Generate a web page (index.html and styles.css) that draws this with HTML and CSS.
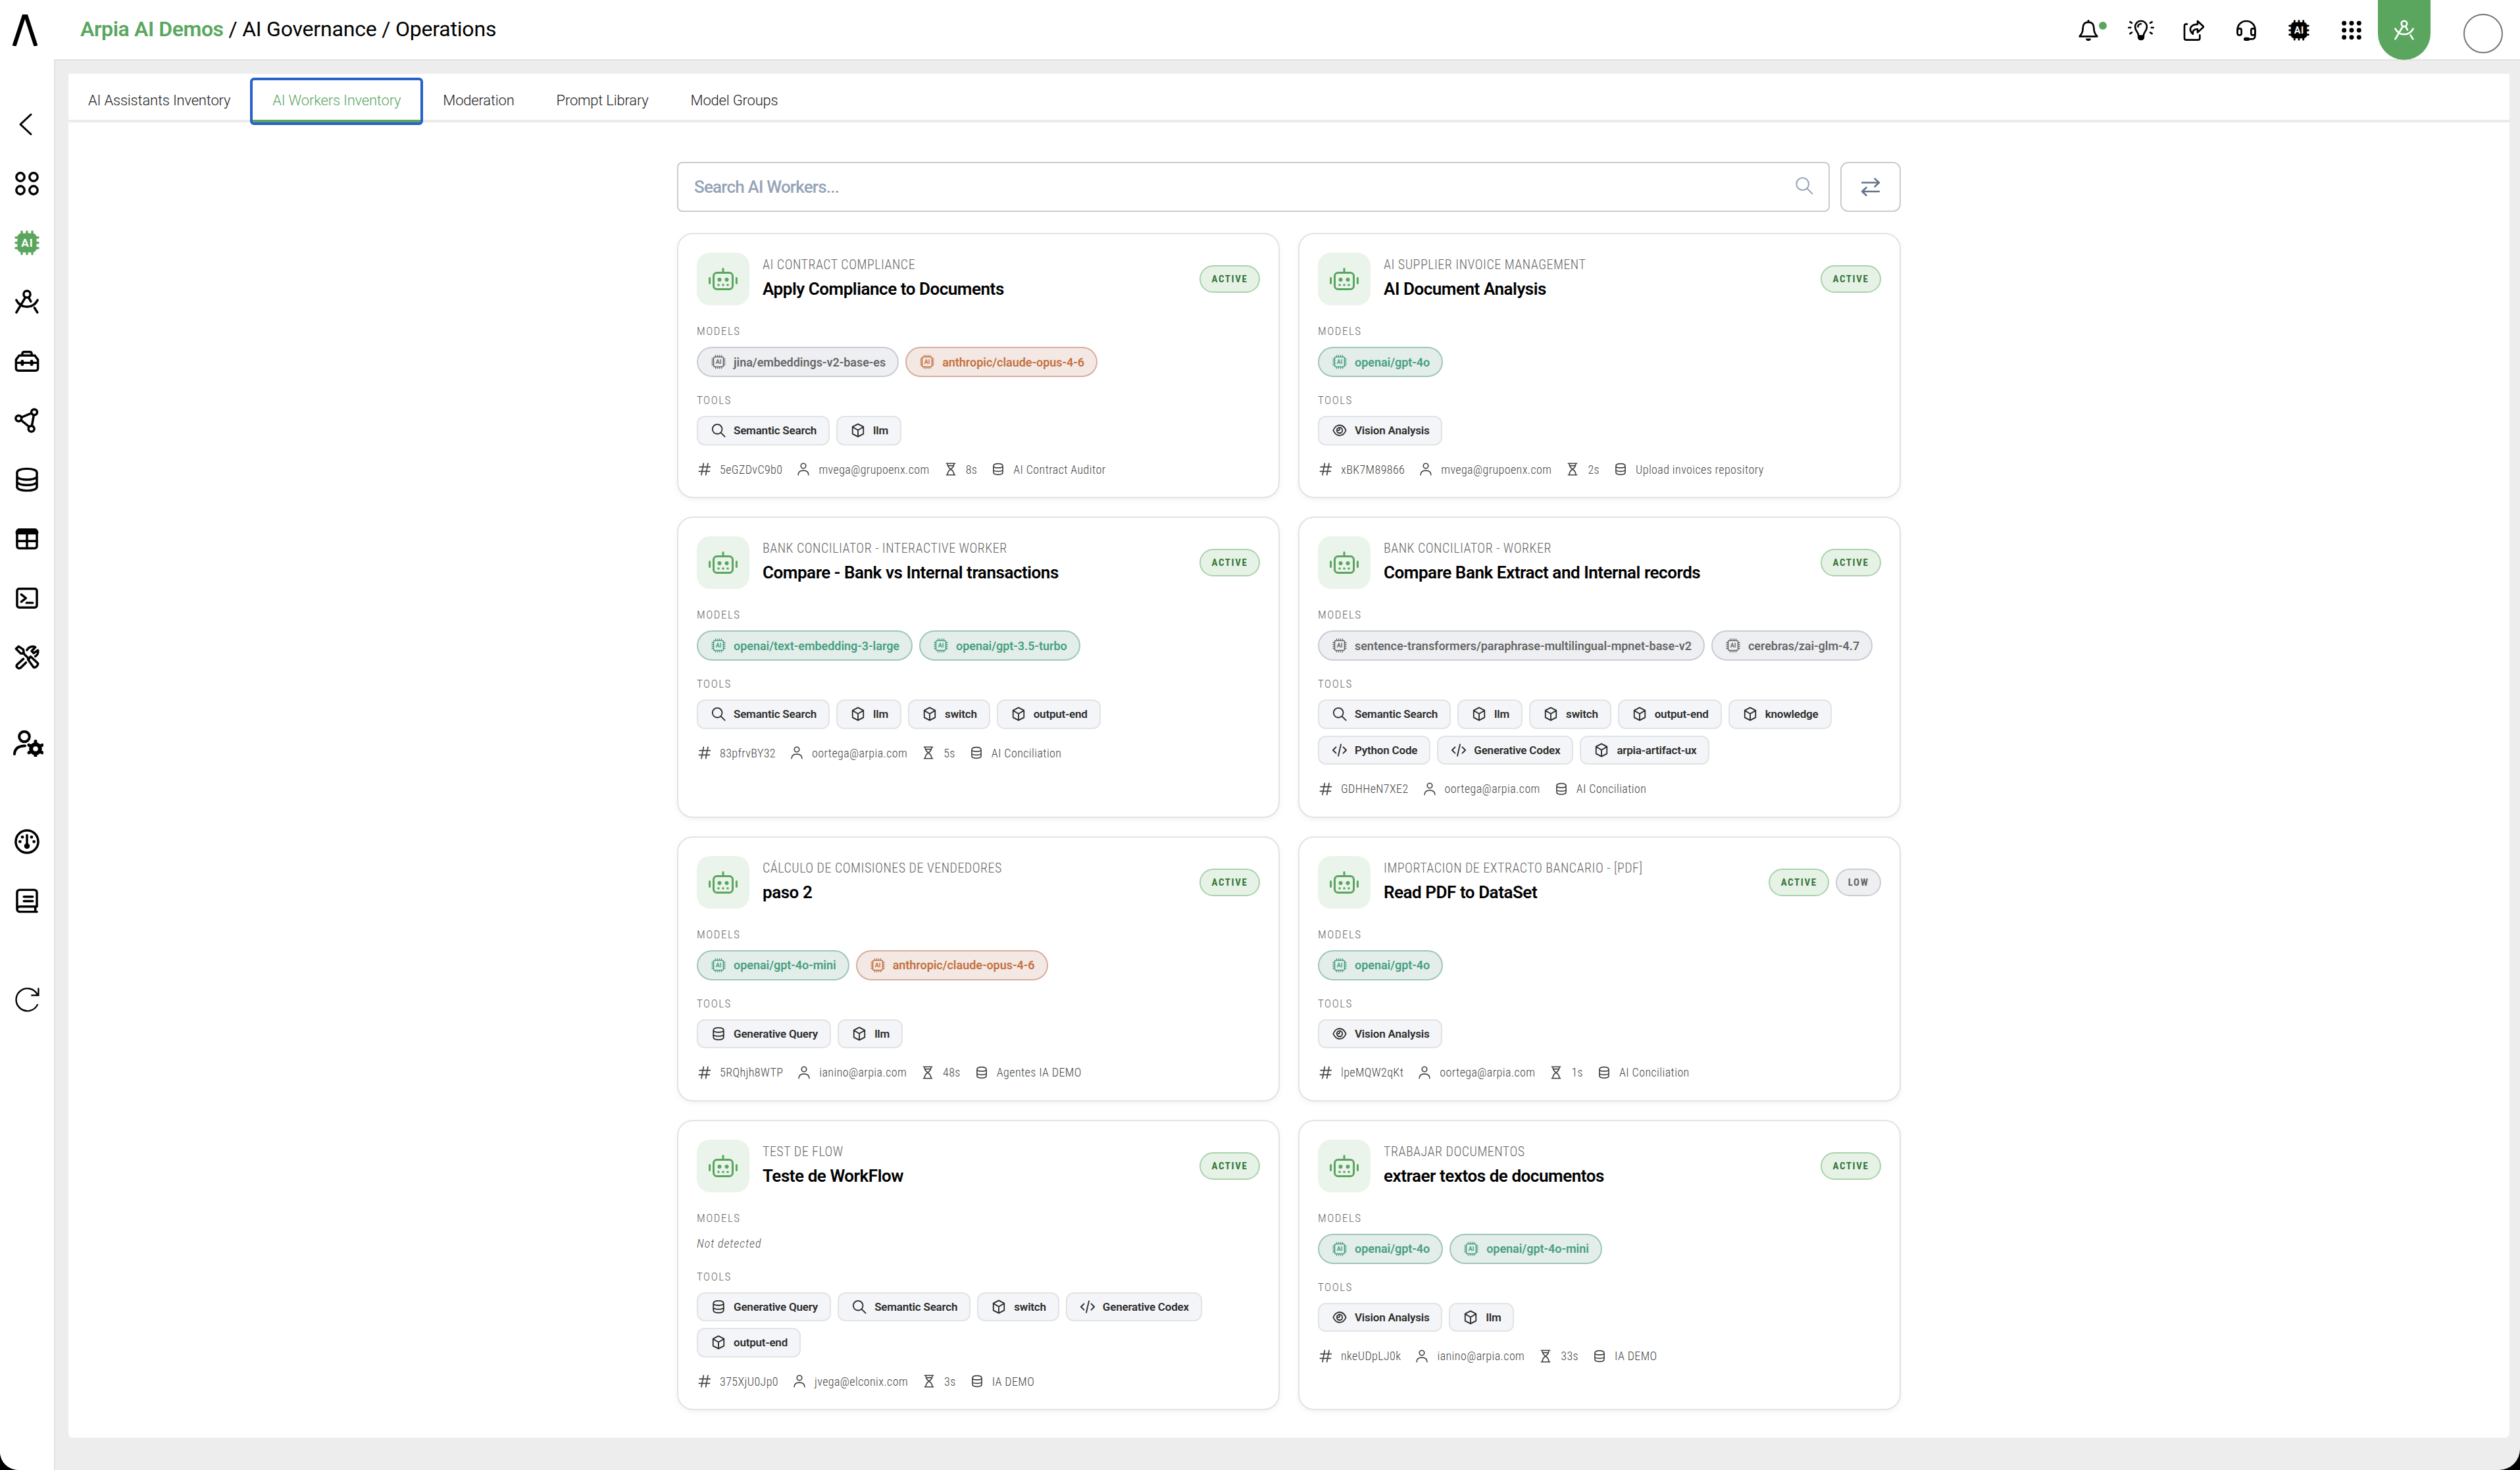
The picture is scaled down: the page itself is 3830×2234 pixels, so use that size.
FILE: index.html
```html
<!DOCTYPE html>
<html lang="en">
<head>
<meta charset="utf-8">
<title>Arpia AI Demos - Operations</title>
<link rel="stylesheet" href="styles.css">
</head>
<body>

<!-- icon sprite -->
<svg class="sprite" xmlns="http://www.w3.org/2000/svg">
  <symbol id="i-robot" viewBox="0 0 44 34">
    <rect x="7.5" y="7.5" width="29" height="25" rx="5" fill="none" stroke="currentColor" stroke-width="3"/>
    <path d="M22 1.5V7M1.6 15.5v8M42.4 15.5v8" stroke="currentColor" stroke-width="3" stroke-linecap="round"/>
    <g fill="currentColor"><circle cx="16.5" cy="18" r="3"/><circle cx="27.5" cy="18" r="3"/><circle cx="15" cy="26" r="1.8"/><circle cx="22" cy="26" r="1.8"/><circle cx="29" cy="26" r="1.8"/></g>
  </symbol>
  <symbol id="i-chip" viewBox="0 0 22 22">
    <rect x="3.500" y="3.500" width="15" height="15" rx="2" fill="none" stroke="currentColor" stroke-width="1.6"/>
    <path d="M6.500 .5v2.500M9.500 .5v2.500M12.500 .5v2.500M15.500 .5v2.500M6.500 19v2.500M9.500 19v2.500M12.500 19v2.500M15.500 19v2.500M.5 6.500h2.500M.5 9.500h2.500M.5 12.500h2.500M.5 15.500h2.500M19 6.500h2.500M19 9.500h2.500M19 12.500h2.500M19 15.500h2.500" stroke="currentColor" stroke-width="1.300" stroke-linecap="butt"/>
    <text class="chip-ai" x="11" y="14.200" text-anchor="middle">AI</text>
  </symbol>
  <symbol id="i-chip-fill" viewBox="0 0 38 38">
    <rect x="4.5" y="4.5" width="29" height="29" rx="6" fill="currentColor"/>
    <path d="M11 2v34M19 2v34M27 2v34M2 11h34M2 19h34M2 27h34" stroke="currentColor" stroke-width="3.4" stroke-linecap="round"/>
    <text class="chip-ai-fill" x="19.500" y="25" text-anchor="middle">AI</text>
  </symbol>
  <symbol id="i-search" viewBox="0 0 24 24"><circle cx="10" cy="10" r="8" /><path d="M16 16l6.5 6.5"/></symbol>
  <symbol id="i-cube" viewBox="0 0 24 24"><path d="M12 1.5l9 4.7v11.6l-9 4.7-9-4.7V6.2zM3.3 6.5L12 11.8l8.7-5.3M12 11.8v10.4"/></symbol>
  <symbol id="i-eye" viewBox="0 0 24 24"><path d="M1.5 12C4 6 8 3.500 12 3.500S20 6 22.500 12C20 18 16 20.500 12 20.500S4 18 1.500 12z"/><circle cx="12" cy="12" r="4.600"/><path d="M12 9.700a2.300 2.300 0 0 1-2.300 2.300"/></symbol>
  <symbol id="i-code" viewBox="0 0 24 24"><path d="M6 7l-5 5 5 5M18 7l5 5-5 5M14.200 2.500L9.800 21.500"/></symbol>
  <symbol id="i-db" viewBox="0 0 24 24"><path d="M3.500 6.500c0-3 2-4.500 8.500-4.500s8.500 1.500 8.500 4.500v11c0 3-2 4.500-8.500 4.500s-8.500-1.500-8.500-4.500zM3.500 7c1 2 4 2.500 8.500 2.500s7.500-.5 8.500-2.500M3.500 13.500c1 2 4 2.500 8.500 2.500s7.500-.5 8.500-2.500"/></symbol>
  <symbol id="i-hash" viewBox="0 0 24 24"><path d="M10 1.500L6 22.500M18 1.500l-4 21M2.500 8h19.500M1.500 16h19.500"/></symbol>
  <symbol id="i-user" viewBox="0 0 24 24"><circle cx="12" cy="6" r="4.500"/><path d="M2.500 22.500c0-5.500 3.500-8 9.500-8s9.500 2.500 9.500 8"/></symbol>
  <symbol id="i-glass" viewBox="0 0 24 24"><path d="M4 1.500h16M4 22.500h16M6 1.500c0 5 1.500 7.500 6 10.500 4.500-3 6-5.500 6-10.500M6 22.500c0-5 1.500-7.500 6-10.500 4.500 3 6 5.500 6 10.500M7.500 5.500h9"/></symbol>
  <symbol id="i-swap" viewBox="0 0 26 26"><path d="M1 7h24M19 1.500L25 7l-6 5.500M25 19.500H1M7 14l-6 5.500L7 25"/></symbol>
  <symbol id="i-compass" viewBox="0 0 24 24"><circle cx="12" cy="4.500" r="3.200"/><path d="M10.500 7.500L1.800 22M13.500 7.500l2.200 4M19.200 17.500L22 22M1.800 10.200c4.500 8.600 15.900 8.600 20.400 0"/></symbol>
</svg>

<div class="app">

  <aside class="sidebar">
    <div class="logo"><svg viewBox="0 0 40 48"><path d="M3.500 48L18.500 2h3L36.500 48" fill="none" stroke="#000" stroke-width="6"/></svg></div>
    <nav class="nav">
      <a class="nav-item back"><svg viewBox="0 0 24 38"><path d="M20 4L4 19l16 15"/></svg></a>
      <a class="nav-item"><svg viewBox="0 0 24 24"><circle cx="5.700" cy="5.700" r="3.900"/><circle cx="18.300" cy="5.700" r="3.900"/><circle cx="5.700" cy="18.300" r="3.900"/><circle cx="18.300" cy="18.300" r="3.900"/></svg></a>
      <a class="nav-item active"><svg class="plain"><use href="#i-chip-fill"/></svg></a>
      <a class="nav-item"><svg><use href="#i-compass"/></svg></a>
      <a class="nav-item"><svg viewBox="0 0 24 24"><path d="M4.500 6.500h15l3 4V19a2 2 0 0 1-2 2h-17a2 2 0 0 1-2-2v-8.500zM7.500 6.500V5c0-1.300.7-2 2-2h5c1.300 0 2 .7 2 2v1.500M1.500 13.500h21"/><path d="M7.500 12v3M16.500 12v3" stroke-width="3"/></svg></a>
      <a class="nav-item"><svg viewBox="0 0 24 24"><circle cx="4" cy="10" r="2.800"/><circle cx="19" cy="4" r="2.800"/><circle cx="16.200" cy="20" r="2.800"/><path d="M6.700 9L16.300 5M6.300 11.700l7.700 6.300M18.500 7l-1.800 10"/></svg></a>
      <a class="nav-item"><svg viewBox="0 0 24 24"><path d="M2.500 5c0-2 4-3.500 9.500-3.500s9.500 1.500 9.500 3.500v14c0 2-4 3.500-9.500 3.500s-9.500-1.500-9.500-3.500zM2.500 9.500c2 1.800 5 2.500 9.500 2.500s7.500-.7 9.500-2.500M2.500 14.700c2 1.800 5 2.500 9.500 2.500s7.500-.7 9.500-2.500"/></svg></a>
      <a class="nav-item"><svg viewBox="0 0 24 24"><rect x="2.500" y="3" width="19" height="18" rx="2"/><path d="M2.500 5.500h19M2.500 14h19M12 7v14" /><path d="M3 5.800h18" stroke-width="4"/></svg></a>
      <a class="nav-item"><svg viewBox="0 0 24 24"><rect x="2.500" y="3" width="19" height="18" rx="2"/><path d="M6.500 8.500l4.500 3.500-4.500 3.500M11.500 16.500h6"/></svg></a>
      <a class="nav-item"><svg viewBox="0 0 24 24"><path d="M1.500 3.800L4 1.500l4.500 3 .5 3.500-3 .3zM8.500 8l5.500 5.500M13 14l2.500-2.800 6.800 6.300c1 1.500-2 5-4 4zM8.500 13.500l-6 5.500c-1.500 2 1 4.500 3.500 3L11 17M12 5c2-3.500 5.500-4 8-2.800L16.500 6l2 2L22.500 5.200c.5 2.300-.5 4.800-2.500 5.800"/></svg></a>
      <a class="nav-item user"><svg class="wide" viewBox="0 0 46 40"><g stroke-width="4"><circle cx="17" cy="9.500" r="7.800"/><path d="M2 36c.5-8 6-12.500 16-12.500"/></g><circle cx="34" cy="28" r="6.800" stroke-width="6"/><path d="M34 16.500v4M34 35.500v4M24 22.300l3.500 2M40.500 31.800l3.500 2M24 33.800l3.500-2M40.500 24.300l3.500-2" stroke-width="5"/></svg></a>
      <a class="nav-item gauge"><svg viewBox="0 0 24 24"><circle cx="12" cy="12" r="10.800"/><path d="M12 5.800V16"/><g fill="currentColor" stroke="none"><circle cx="12" cy="16.300" r="2.700"/><circle cx="7.600" cy="7.600" r="1.500"/><circle cx="16.400" cy="7.600" r="1.500"/><circle cx="5.300" cy="12" r="1.500"/><circle cx="18.700" cy="12" r="1.500"/></g></svg></a>
      <a class="nav-item"><svg viewBox="0 0 24 24"><path d="M21.500 22.500H5a2.500 2.500 0 0 1-2.500-2.500V4A2.500 2.500 0 0 1 5 1.500h14A2.500 2.500 0 0 1 21.500 4v13.500H5A2.500 2.500 0 0 0 2.500 20M20 18v4M9 8h8.500M9 12.300h8.500"/></svg></a>
      <a class="nav-item refresh"><svg viewBox="0 0 24 24"><path d="M22.300 16.500A10.800 10.800 0 1 1 22 7.200M23 1v7h-7"/></svg></a>
    </nav>
  </aside>

  <div class="main">
    <header class="topbar">
      <div class="breadcrumb"><b>Arpia AI Demos</b> / AI Governance / Operations</div>
      <div class="tools">
        <a class="tool bell"><svg viewBox="0 0 24 24"><path d="M12 1v2M12 2.700c-4.200 0-6.300 3-6.300 6.800 0 5-1.500 6.500-3.700 9.500h20c-2.200-3-3.700-4.500-3.700-9.500 0-3.800-2.100-6.800-6.300-6.800z"/><path d="M9.500 21.700a2.500 2 0 0 0 5 0z" fill="currentColor" stroke-width=".8"/></svg><i class="dot"></i></a>
        <a class="tool"><svg class="bulb" viewBox="0 0 30 24"><path d="M12 17.500c0-3.500-3.700-4.500-3.700-9.500a6.700 6.700 0 0 1 13.400 0c0 5-3.700 6-3.700 9.500M11.500 8A3.500 3.500 0 0 1 15 4.700M1 9h2.200M26.800 9H29M2.500 2.500l2 1.200M27.500 2.500l-2 1.200M2.500 15.800l2-1.200M27.500 15.800l-2-1.200"/><path d="M12 18.500h6c0 3-1 4-3 4s-3-1-3-4z" fill="currentColor"/></svg></a>
        <a class="tool"><svg viewBox="0 0 24 24"><path d="M4.500 5H3.500A2 2 0 0 0 1.500 7v14a2 2 0 0 0 2 2h13.500a2 2 0 0 0 2-2v-3.500M16.500 1.500L23.500 8l-7 6.500v-3.800c-4 0-6 1.500-5.300 5.600C6 12 7.500 5.500 16.500 5.200z"/></svg></a>
        <a class="tool"><svg viewBox="0 0 24 24"><path d="M2 15V11a10 9.500 0 0 1 20 0v7.500c0 2.500-1.500 3.500-4 3.500h-5"/><rect x="2" y="10" width="4.500" height="7.500" rx="2"/><rect x="17.500" y="10" width="4.500" height="7.500" rx="2"/><path d="M11 22h3" stroke-width="4"/></svg></a>
        <a class="tool"><svg class="plain"><use href="#i-chip-fill"/></svg></a>
        <a class="tool"><svg class="plain" viewBox="0 0 24 24"><g fill="currentColor"><circle cx="3.500" cy="4" r="2.600"/><circle cx="12" cy="4" r="2.600"/><circle cx="20.500" cy="4" r="2.600"/><circle cx="3.500" cy="12" r="2.600"/><circle cx="12" cy="12" r="2.600"/><circle cx="20.500" cy="12" r="2.600"/><circle cx="3.500" cy="20" r="2.600"/><circle cx="12" cy="20" r="2.600"/><circle cx="20.500" cy="20" r="2.600"/></g></svg></a>
        <a class="tool current"><svg><use href="#i-compass"/></svg></a>
        <span class="avatar"></span>
      </div>
    </header>

    <section class="panel">
      <div class="tabs">
        <a class="tab">AI Assistants Inventory</a>
        <a class="tab active">AI Workers Inventory</a>
        <a class="tab">Moderation</a>
        <a class="tab">Prompt Library</a>
        <a class="tab">Model Groups</a>
      </div>

      <div class="content">
        <div class="searchbar">
          <div class="search"><span>Search AI Workers...</span><svg><use href="#i-search"/></svg></div>
          <div class="swap"><svg><use href="#i-swap"/></svg></div>
        </div>

        <div class="cards">

          <article class="card">
            <div class="head">
              <div class="bot"><svg><use href="#i-robot"/></svg></div>
              <div class="names"><div class="project">AI CONTRACT COMPLIANCE</div><h3>Apply Compliance to Documents</h3></div>
              <span class="badge">ACTIVE</span>
            </div>
            <div class="label">MODELS</div>
            <div class="chips">
              <span class="model"><svg><use href="#i-chip"/></svg>jina/embeddings-v2-base-es</span>
              <span class="model anthropic"><svg><use href="#i-chip"/></svg>anthropic/claude-opus-4-6</span>
            </div>
            <div class="label">TOOLS</div>
            <div class="chips">
              <span class="chip"><svg><use href="#i-search"/></svg>Semantic Search</span>
              <span class="chip"><svg><use href="#i-cube"/></svg>llm</span>
            </div>
            <div class="meta">
              <span><svg><use href="#i-hash"/></svg>5eGZDvC9b0</span>
              <span><svg><use href="#i-user"/></svg>mvega@grupoenx.com</span>
              <span><svg><use href="#i-glass"/></svg>8s</span>
              <span><svg><use href="#i-db"/></svg>AI Contract Auditor</span>
            </div>
          </article>

          <article class="card">
            <div class="head">
              <div class="bot"><svg><use href="#i-robot"/></svg></div>
              <div class="names"><div class="project">AI SUPPLIER INVOICE MANAGEMENT</div><h3>AI Document Analysis</h3></div>
              <span class="badge">ACTIVE</span>
            </div>
            <div class="label">MODELS</div>
            <div class="chips">
              <span class="model openai"><svg><use href="#i-chip"/></svg>openai/gpt-4o</span>
            </div>
            <div class="label">TOOLS</div>
            <div class="chips">
              <span class="chip"><svg><use href="#i-eye"/></svg>Vision Analysis</span>
            </div>
            <div class="meta">
              <span><svg><use href="#i-hash"/></svg>xBK7M89866</span>
              <span><svg><use href="#i-user"/></svg>mvega@grupoenx.com</span>
              <span><svg><use href="#i-glass"/></svg>2s</span>
              <span><svg><use href="#i-db"/></svg>Upload invoices repository</span>
            </div>
          </article>

          <article class="card">
            <div class="head">
              <div class="bot"><svg><use href="#i-robot"/></svg></div>
              <div class="names"><div class="project">BANK CONCILIATOR - INTERACTIVE WORKER</div><h3>Compare - Bank vs Internal transactions</h3></div>
              <span class="badge">ACTIVE</span>
            </div>
            <div class="label">MODELS</div>
            <div class="chips">
              <span class="model openai"><svg><use href="#i-chip"/></svg>openai/text-embedding-3-large</span>
              <span class="model openai"><svg><use href="#i-chip"/></svg>openai/gpt-3.5-turbo</span>
            </div>
            <div class="label">TOOLS</div>
            <div class="chips">
              <span class="chip"><svg><use href="#i-search"/></svg>Semantic Search</span>
              <span class="chip"><svg><use href="#i-cube"/></svg>llm</span>
              <span class="chip"><svg><use href="#i-cube"/></svg>switch</span>
              <span class="chip"><svg><use href="#i-cube"/></svg>output-end</span>
            </div>
            <div class="meta">
              <span><svg><use href="#i-hash"/></svg>83pfrvBY32</span>
              <span><svg><use href="#i-user"/></svg>oortega@arpia.com</span>
              <span><svg><use href="#i-glass"/></svg>5s</span>
              <span><svg><use href="#i-db"/></svg>AI Conciliation</span>
            </div>
          </article>

          <article class="card">
            <div class="head">
              <div class="bot"><svg><use href="#i-robot"/></svg></div>
              <div class="names"><div class="project">BANK CONCILIATOR - WORKER</div><h3>Compare Bank Extract and Internal records</h3></div>
              <span class="badge">ACTIVE</span>
            </div>
            <div class="label">MODELS</div>
            <div class="chips">
              <span class="model"><svg><use href="#i-chip"/></svg>sentence-transformers/paraphrase-multilingual-mpnet-base-v2</span>
              <span class="model"><svg><use href="#i-chip"/></svg>cerebras/zai-glm-4.7</span>
            </div>
            <div class="label">TOOLS</div>
            <div class="chips">
              <span class="chip"><svg><use href="#i-search"/></svg>Semantic Search</span>
              <span class="chip"><svg><use href="#i-cube"/></svg>llm</span>
              <span class="chip"><svg><use href="#i-cube"/></svg>switch</span>
              <span class="chip"><svg><use href="#i-cube"/></svg>output-end</span>
              <span class="chip"><svg><use href="#i-cube"/></svg>knowledge</span>
              <span class="chip"><svg><use href="#i-code"/></svg>Python Code</span>
              <span class="chip"><svg><use href="#i-code"/></svg>Generative Codex</span>
              <span class="chip"><svg><use href="#i-cube"/></svg>arpia-artifact-ux</span>
            </div>
            <div class="meta">
              <span><svg><use href="#i-hash"/></svg>GDHHeN7XE2</span>
              <span><svg><use href="#i-user"/></svg>oortega@arpia.com</span>
              <span><svg><use href="#i-db"/></svg>AI Conciliation</span>
            </div>
          </article>

          <article class="card">
            <div class="head">
              <div class="bot"><svg><use href="#i-robot"/></svg></div>
              <div class="names"><div class="project">CÁLCULO DE COMISIONES DE VENDEDORES</div><h3>paso 2</h3></div>
              <span class="badge">ACTIVE</span>
            </div>
            <div class="label">MODELS</div>
            <div class="chips">
              <span class="model openai"><svg><use href="#i-chip"/></svg>openai/gpt-4o-mini</span>
              <span class="model anthropic"><svg><use href="#i-chip"/></svg>anthropic/claude-opus-4-6</span>
            </div>
            <div class="label">TOOLS</div>
            <div class="chips">
              <span class="chip"><svg><use href="#i-db"/></svg>Generative Query</span>
              <span class="chip"><svg><use href="#i-cube"/></svg>llm</span>
            </div>
            <div class="meta">
              <span><svg><use href="#i-hash"/></svg>5RQhjh8WTP</span>
              <span><svg><use href="#i-user"/></svg>ianino@arpia.com</span>
              <span><svg><use href="#i-glass"/></svg>48s</span>
              <span><svg><use href="#i-db"/></svg>Agentes IA DEMO</span>
            </div>
          </article>

          <article class="card">
            <div class="head">
              <div class="bot"><svg><use href="#i-robot"/></svg></div>
              <div class="names"><div class="project">IMPORTACION DE EXTRACTO BANCARIO - [PDF]</div><h3>Read PDF to DataSet</h3></div>
              <span class="badge">ACTIVE</span>
              <span class="badge low">LOW</span>
            </div>
            <div class="label">MODELS</div>
            <div class="chips">
              <span class="model openai"><svg><use href="#i-chip"/></svg>openai/gpt-4o</span>
            </div>
            <div class="label">TOOLS</div>
            <div class="chips">
              <span class="chip"><svg><use href="#i-eye"/></svg>Vision Analysis</span>
            </div>
            <div class="meta">
              <span><svg><use href="#i-hash"/></svg>lpeMQW2qKt</span>
              <span><svg><use href="#i-user"/></svg>oortega@arpia.com</span>
              <span><svg><use href="#i-glass"/></svg>1s</span>
              <span><svg><use href="#i-db"/></svg>AI Conciliation</span>
            </div>
          </article>

          <article class="card">
            <div class="head">
              <div class="bot"><svg><use href="#i-robot"/></svg></div>
              <div class="names"><div class="project">TEST DE FLOW</div><h3>Teste de WorkFlow</h3></div>
              <span class="badge">ACTIVE</span>
            </div>
            <div class="label">MODELS</div>
            <div class="none">Not detected</div>
            <div class="label">TOOLS</div>
            <div class="chips">
              <span class="chip"><svg><use href="#i-db"/></svg>Generative Query</span>
              <span class="chip"><svg><use href="#i-search"/></svg>Semantic Search</span>
              <span class="chip"><svg><use href="#i-cube"/></svg>switch</span>
              <span class="chip"><svg><use href="#i-code"/></svg>Generative Codex</span>
              <span class="chip"><svg><use href="#i-cube"/></svg>output-end</span>
            </div>
            <div class="meta">
              <span><svg><use href="#i-hash"/></svg>375XjU0Jp0</span>
              <span><svg><use href="#i-user"/></svg>jvega@elconix.com</span>
              <span><svg><use href="#i-glass"/></svg>3s</span>
              <span><svg><use href="#i-db"/></svg>IA DEMO</span>
            </div>
          </article>

          <article class="card">
            <div class="head">
              <div class="bot"><svg><use href="#i-robot"/></svg></div>
              <div class="names"><div class="project">TRABAJAR DOCUMENTOS</div><h3>extraer textos de documentos</h3></div>
              <span class="badge">ACTIVE</span>
            </div>
            <div class="label">MODELS</div>
            <div class="chips">
              <span class="model openai"><svg><use href="#i-chip"/></svg>openai/gpt-4o</span>
              <span class="model openai"><svg><use href="#i-chip"/></svg>openai/gpt-4o-mini</span>
            </div>
            <div class="label">TOOLS</div>
            <div class="chips">
              <span class="chip"><svg><use href="#i-eye"/></svg>Vision Analysis</span>
              <span class="chip"><svg><use href="#i-cube"/></svg>llm</span>
            </div>
            <div class="meta">
              <span><svg><use href="#i-hash"/></svg>nkeUDpLJ0k</span>
              <span><svg><use href="#i-user"/></svg>ianino@arpia.com</span>
              <span><svg><use href="#i-glass"/></svg>33s</span>
              <span><svg><use href="#i-db"/></svg>IA DEMO</span>
            </div>
          </article>

        </div>
      </div>
    </section>
  </div>
</div>
</body>
</html>
```
FILE: styles.css
```css
*{
    box-sizing:border-box;
}
body{
    margin:0;
    background:#000;
    font-family:Roboto, "Liberation Sans", sans-serif;
    color:#000;
}
svg{
    display:block;
    flex:none;
    fill:none;
    stroke:currentColor;
    stroke-width:2;
    stroke-linecap:round;
    stroke-linejoin:round;
}
svg.plain, .bot svg{
    stroke:none;
}
.sprite{
    display:none;
}
.chip-ai{
    font:bold 9px Roboto, sans-serif;
    letter-spacing:0;
    fill:currentColor;
    stroke:none;
}
.chip-ai-fill{
    font:bold 17px Roboto, sans-serif;
    letter-spacing:1px;
    fill:#fff;
    stroke:none;
}
.app{
    display:flex;
    height:2234px;
    background:#ededed;
    border-radius:0 0 32px 28px;
    overflow:hidden;
}

/* sidebar */
.sidebar{
    width:84px;
    display:flex;
    flex-direction:column;
    background:#fff;
}
.logo{
    height:90px;
    padding:22px 0 0 18px;
}
.logo svg{
    width:40px;
    height:48px;
    stroke-linecap:butt;
    stroke-linejoin:miter;
}
.nav{
    flex:1;
    padding-top:54px;
    border-right:2px solid #e2e2e2;
}
.nav-item{
    display:flex;
    align-items:center;
    justify-content:center;
    height:90px;
}
.nav-item svg{
    width:38px;
    height:38px;
    stroke-width:2.2;
}
.nav-item svg.plain{
    stroke:none;
}
.nav-item.active{
    color:#5aa65f;
}
.nav-item.back svg{
    width:24px;
    stroke-width:3;
    margin-right:4px;
}
.nav-item.user{
    margin-top:41px;
}
.nav-item svg.wide{
    width:46px;
    height:40px;
    margin-left:4px;
}
.nav-item.gauge{
    margin-top:59px;
}
.nav-item.refresh{
    margin-top:60px;
}
.nav-item.refresh svg{
    stroke-width:1.5;
    stroke-linecap:butt;
    stroke-linejoin:miter;
}

/* top bar */
.main{
    flex:1;
}
.topbar{
    display:flex;
    justify-content:space-between;
    height:92px;
    padding:0 26px 0 40px;
    margin-left:-2px;
    border-bottom:2px solid #e2e2e2;
    background:#fff;
}
.breadcrumb{
    font-size:32px;
    line-height:88px;
    letter-spacing:-.2px;
}
.breadcrumb b{
    color:#5aa65f;
    font-weight:600;
    letter-spacing:-.4px;
}
.tools{
    display:flex;
}
.tool{
    position:relative;
    width:80px;
    height:91px;
    display:flex;
    align-items:center;
    justify-content:center;
}
.tool svg{
    width:32px;
    height:32px;
}
.tool svg.bulb{
    width:42px;
}
.dot{
    position:absolute;
    left:56px;
    top:33px;
    width:12px;
    height:12px;
    border-radius:50%;
    background:#5aa65f;
}
.tool.current{
    background:#5aa65f;
    color:#fff;
    border-radius:0 0 40px 40px;
}
.avatar{
    width:60px;
    height:60px;
    margin:21px 0 0 50px;
    border:2px solid #757575;
    border-radius:50%;
}

/* panel */
.panel{
    margin:20px 16px 0 20px;
    height:2073px;
    background:#fff;
    border-radius:0 0 7px 7px;
}
.tabs{
    display:flex;
    gap:4px;
    height:74px;
    padding-top:10px;
    border-bottom:4px solid #ebebeb;
}
.tab{
    height:64px;
    padding:0 30px;
    font-size:22px;
    font-weight:350;
    line-height:61px;
    letter-spacing:-.2px;
    color:#222;
}
.tab.active{
    color:#5aa65f;
    border-bottom:4px solid #5aa65f;
    outline:4px solid #2861c9;
    border-radius:2px;
}
.content{
    width:1860px;
    margin:0 auto;
    padding-top:60px;
}
.searchbar{
    display:flex;
    gap:16px;
    height:76px;
}
.search{
    flex:1;
    display:flex;
    align-items:center;
    justify-content:space-between;
    padding:0 23px 0 24px;
    border:2px solid #cbcbcb;
    border-radius:8px;
    font-size:26px;
    font-weight:500;
    letter-spacing:-.8px;
    color:#94a3b8;
}
.search svg{
    width:28px;
    height:28px;
    margin-top:-4px;
    stroke-width:1.7;
}
.swap{
    width:92px;
    display:flex;
    align-items:center;
    justify-content:center;
    border:2px solid #cbcbcb;
    border-radius:12px;
    color:#64748b;
}
.swap svg{
    width:28px;
    height:28px;
    stroke-width:2.4;
}

/* cards */
.cards{
    display:grid;
    grid-template-columns:1fr 1fr;
    gap:28px;
    margin-top:32px;
}
.card{
    padding:28px;
    border:2px solid #e2e3e4;
    border-radius:24px;
    background:#fff;
    box-shadow:0 3px 8px rgba(0,0,0,.05);
}
.head{
    display:flex;
    align-items:center;
    gap:10px;
    height:80px;
}
.bot{
    width:80px;
    height:80px;
    display:flex;
    align-items:center;
    justify-content:center;
    background:#eaf4ea;
    border-radius:20px;
    color:#5aa65f;
}
.bot svg{
    width:44px;
    height:34px;
}
.names{
    flex:1;
    margin-left:10px;
}
.project{
    font-size:20px;
    font-weight:300;
    font-stretch:75%;
    line-height:26px;
    letter-spacing:.5px;
    color:#666;
}
h3{
    margin:4px 0 0;
    font-size:26px;
    font-weight:600;
    line-height:40px;
    letter-spacing:-.45px;
}
.badge{
    height:42px;
    padding:0 16.5px;
    border:2px solid #a9d3ac;
    border-radius:21px;
    background:#e7f2e7;
    color:#35763a;
    font-size:15px;
    font-weight:700;
    font-stretch:75%;
    line-height:38px;
    letter-spacing:1.6px;
}
.badge.low{
    border-color:#c9ccd4;
    background:#eeeff1;
    color:#666;
}
.label{
    margin:28px 0 13px;
    font-size:17px;
    font-weight:300;
    font-stretch:75%;
    line-height:22px;
    letter-spacing:1.5px;
    color:#666;
}
.chips + .label, .none + .label{
    margin-top:24px;
}
.chips{
    display:flex;
    flex-wrap:wrap;
    gap:10px;
}
.model, .chip{
    display:flex;
    align-items:center;
    gap:12px;
    padding:0 18px 0 20px;
    border:2px solid #c9ccd4;
    font-size:18px;
    font-weight:600;
}
.model{
    height:46px;
    border-radius:23px;
    background:#eeeff2;
    color:#666;
    letter-spacing:-.04px;
}
.model.anthropic{
    background:#f3e8e3;
    border-color:#d9ae9b;
    color:#c4703f;
}
.model.openai{
    background:#e3edea;
    border-color:#9fc7b9;
    color:#45a07f;
}
.chip{
    height:44.5px;
    border-color:#e2e3e4;
    border-radius:12px;
    background:#f4f5f8;
    color:#2b2b2b;
    font-size:17px;
    letter-spacing:-.2px;
}
.model svg, .chip svg{
    width:22px;
    height:22px;
}
.none{
    height:30px;
    font-size:18px;
    font-style:italic;
    font-weight:300;
    font-stretch:75%;
    letter-spacing:.9px;
    line-height:30px;
    color:#555;
}
.meta{
    display:flex;
    gap:20px;
    height:28px;
    margin-top:22.5px;
    font-size:18px;
    font-weight:300;
    font-stretch:75%;
    letter-spacing:.4px;
    color:#444;
}
.meta span{
    display:flex;
    align-items:center;
    gap:11px;
}
.meta svg{
    width:20px;
    height:20px;
    margin-left:2px;
    margin-right:2px;
    stroke-width:2;
}
```
